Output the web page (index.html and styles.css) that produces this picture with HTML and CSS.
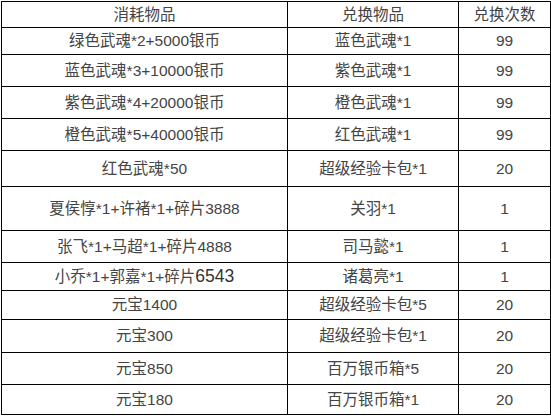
FILE: index.html
```html
<!DOCTYPE html>
<html>
<head>
<meta charset="utf-8">
<link rel="stylesheet" href="styles.css">
</head>
<body>
<div class="wrap">
<table class="grid">
<colgroup><col class="c1"><col class="c2"><col class="c3"></colgroup>
<tr class="h26"><td>消耗物品</td><td>兑换物品</td><td>兑换次数</td></tr>
<tr class="h27"><td>绿色武魂*2+5000银币</td><td>蓝色武魂*1</td><td>99</td></tr>
<tr class="h32"><td>蓝色武魂*3+10000银币</td><td>紫色武魂*1</td><td>99</td></tr>
<tr class="h32"><td>紫色武魂*4+20000银币</td><td>橙色武魂*1</td><td>99</td></tr>
<tr class="h32"><td>橙色武魂*5+40000银币</td><td>红色武魂*1</td><td>99</td></tr>
<tr class="h36"><td>红色武魂*50</td><td>超级经验卡包*1</td><td>20</td></tr>
<tr class="h44"><td>夏侯惇*1+许褚*1+碎片3888</td><td>关羽*1</td><td>1</td></tr>
<tr class="h32"><td>张飞*1+马超*1+碎片4888</td><td>司马懿*1</td><td>1</td></tr>
<tr class="h28"><td>小乔*1+郭嘉*1+碎片<span class="big">6543</span></td><td>诸葛亮*1</td><td>1</td></tr>
<tr class="h29"><td>元宝1400</td><td>超级经验卡包*5</td><td>20</td></tr>
<tr class="h33"><td>元宝300</td><td>超级经验卡包*1</td><td>20</td></tr>
<tr class="h32"><td>元宝850</td><td>百万银币箱*5</td><td>20</td></tr>
<tr class="h30"><td>元宝180</td><td>百万银币箱*1</td><td>20</td></tr>
</table>
</div>
</body>
</html>
```
FILE: styles.css
```css
html, body {
  margin: 0;
  padding: 0;
  background: #fff;
}
.wrap {
  padding: 1px 0 0 1px;
}
.grid {
  border-collapse: collapse;
  table-layout: fixed;
  width: 549px;
  font-family: "Liberation Sans", "Noto Sans CJK SC", sans-serif;
  font-size: 15.5px;
  color: #444;
}
.c1 { width: 286px; }
.c2 { width: 171px; }
.c3 { width: 92px; }
.grid td {
  border: 1px solid #000;
  text-align: center;
  vertical-align: middle;
  padding: 0;
  line-height: 18px;
  white-space: nowrap;
}
.big {
  font-size: 17.5px;
  color: #333;
}
.h26 td { height: 25px; }
.h27 td { height: 26px; }
.h28 td { height: 27px; }
.h29 td { height: 28px; }
.h30 td { height: 29px; }
.h32 td { height: 31px; }
.h33 td { height: 32px; }
.h36 td { height: 35px; }
.h44 td { height: 43px; }
```
